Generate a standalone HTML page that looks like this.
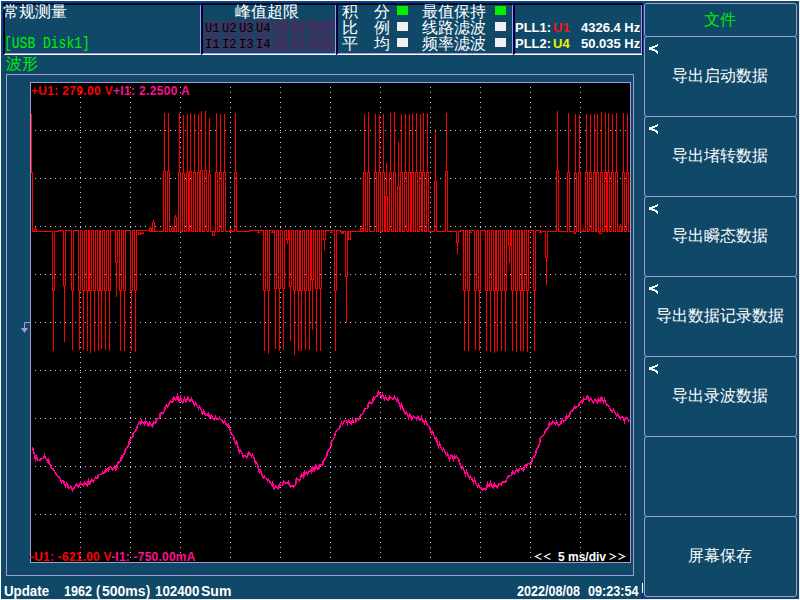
<!DOCTYPE html>
<html><head><meta charset="utf-8">
<style>
*{margin:0;padding:0;box-sizing:border-box}
html,body{width:800px;height:600px;overflow:hidden}
body{-webkit-font-smoothing:antialiased;background:#104968;position:relative;font-family:"Liberation Sans",sans-serif;color:#fff}
.a{position:absolute}
.cj{font-size:16px;line-height:16px;font-weight:300;white-space:nowrap}
.ln{position:absolute}
.btn{position:absolute;left:644px;width:153px;border:1px solid #a898d8;border-radius:3px}
.cell{position:absolute;background:#3a3460;width:15px;height:15px}
.ct{position:absolute;font-family:"Liberation Mono",monospace;font-size:12px;color:#000;white-space:nowrap}
.sq{position:absolute;width:11px;height:9px;background:#f0f0f0}
.b{font-weight:bold;white-space:nowrap}
.pl{font-size:13px;line-height:15px}
.st{top:584px;font-size:14px;line-height:15px;transform:scaleX(0.9);transform-origin:0 0}
</style></head><body>
<!-- image edge -->
<div class="ln" style="left:0;top:0;width:800px;height:1px;background:#fff"></div>
<div class="ln" style="left:0;top:0;width:1px;height:600px;background:#fff"></div>
<div class="ln" style="left:0;top:599px;width:800px;height:1px;background:#e8eef2"></div>
<div class="ln" style="left:799px;top:0;width:1px;height:600px;background:#e8eef2"></div>

<!-- top panels: navy top/left, black inner; white bottom outer, lavender inner -->
<div class="ln" style="left:3px;top:3px;width:640px;height:1px;background:#000080"></div>
<div class="ln" style="left:4px;top:4px;width:638px;height:1px;background:#000"></div>
<div class="ln" style="left:4px;top:53px;width:638px;height:1px;background:#a898d8"></div>
<div class="ln" style="left:3px;top:54px;width:640px;height:1px;background:#fff"></div>
<!-- verticals -->
<div class="ln" style="left:3px;top:3px;width:1px;height:52px;background:#000080"></div>
<div class="ln" style="left:4px;top:4px;width:1px;height:50px;background:#000"></div>
<div class="ln" style="left:200px;top:5px;width:1px;height:49px;background:#a898d8"></div>
<div class="ln" style="left:201px;top:3px;width:1px;height:52px;background:#000080"></div>
<div class="ln" style="left:202px;top:4px;width:1px;height:50px;background:#000"></div>
<div class="ln" style="left:335px;top:5px;width:1px;height:49px;background:#a898d8"></div>
<div class="ln" style="left:336px;top:3px;width:1px;height:52px;background:#000080"></div>
<div class="ln" style="left:337px;top:4px;width:1px;height:50px;background:#000"></div>
<div class="ln" style="left:512px;top:5px;width:1px;height:49px;background:#a898d8"></div>
<div class="ln" style="left:513px;top:3px;width:1px;height:52px;background:#000080"></div>
<div class="ln" style="left:514px;top:4px;width:1px;height:50px;background:#000"></div>
<div class="ln" style="left:641px;top:5px;width:1px;height:49px;background:#a898d8"></div>
<div class="ln" style="left:642px;top:3px;width:1px;height:52px;background:#000080"></div>

<!-- panel 1 -->
<div class="a cj" style="left:3px;top:4px;color:#fff">常规测量</div>
<div class="a" id="usb" style="left:4px;top:36px;color:#00f000;font-family:'Liberation Mono',monospace;font-size:13px;line-height:13px;transform:scaleY(1.2);transform-origin:0 0;white-space:nowrap">[USB Disk1]</div>

<!-- panel 2 -->
<div class="a cj" style="left:235px;top:4px">峰值超限</div>
<div class="cell" style="left:205px;top:20px"></div><div class="cell" style="left:222px;top:20px"></div><div class="cell" style="left:239px;top:20px"></div><div class="cell" style="left:256px;top:20px"></div><div class="cell" style="left:273px;top:20px"></div><div class="cell" style="left:290px;top:20px"></div><div class="cell" style="left:307px;top:20px;width:27px"></div>
<div class="cell" style="left:205px;top:36px"></div><div class="cell" style="left:222px;top:36px"></div><div class="cell" style="left:239px;top:36px"></div><div class="cell" style="left:256px;top:36px"></div><div class="cell" style="left:273px;top:36px"></div><div class="cell" style="left:290px;top:36px"></div><div class="cell" style="left:307px;top:36px;width:27px"></div>
<div class="ct" style="left:205px;top:22px">U1</div><div class="ct" style="left:222px;top:22px">U2</div><div class="ct" style="left:239px;top:22px">U3</div><div class="ct" style="left:256px;top:22px">U4</div>
<div class="ct" style="left:205px;top:38px">I1</div><div class="ct" style="left:222px;top:38px">I2</div><div class="ct" style="left:239px;top:38px">I3</div><div class="ct" style="left:256px;top:38px">I4</div>

<!-- panel 3 -->
<div class="a cj" style="left:342px;top:4px">积</div><div class="a cj" style="left:374px;top:4px">分</div>
<div class="a cj" style="left:342px;top:20px">比</div><div class="a cj" style="left:374px;top:20px">例</div>
<div class="a cj" style="left:342px;top:36px">平</div><div class="a cj" style="left:374px;top:36px">均</div>
<div class="sq" style="left:397px;top:6px;background:#00f000"></div>
<div class="sq" style="left:397px;top:22px"></div>
<div class="sq" style="left:397px;top:38px"></div>
<div class="a cj" style="left:422px;top:4px">最值保持</div>
<div class="a cj" style="left:422px;top:20px">线路滤波</div>
<div class="a cj" style="left:422px;top:36px">频率滤波</div>
<div class="sq" style="left:495px;top:6px;background:#00f000"></div>
<div class="sq" style="left:495px;top:22px"></div>
<div class="sq" style="left:495px;top:38px"></div>

<!-- panel 4 PLL -->
<div class="a b pl" style="left:515px;top:20px">PLL1:</div>
<div class="a b pl" style="left:553px;top:20px;color:#ff1010">U1</div>
<div class="a b pl" style="left:515px;top:36px">PLL2:</div>
<div class="a b pl" style="left:553px;top:36px;color:#f0f000">U4</div>
<div class="a b pl" style="left:581px;top:20px">4326.4 Hz</div>
<div class="a b pl" style="left:581px;top:36px">50.035 Hz</div>

<!-- right menu -->
<div class="btn" style="top:3px;height:34px"></div>
<div class="btn" style="top:36px;height:81px"></div>
<div class="btn" style="top:116px;height:81px"></div>
<div class="btn" style="top:196px;height:81px"></div>
<div class="btn" style="top:276px;height:81px"></div>
<div class="btn" style="top:356px;height:81px"></div>
<div class="btn" style="top:436px;height:81px"></div>
<div class="btn" style="top:516px;height:81px"></div>
<div class="a cj" style="left:704px;top:12px;color:#00f000">文件</div>
<div class="a cj" style="left:672px;top:68px">导出启动数据</div>
<div class="a cj" style="left:672px;top:148px">导出堵转数据</div>
<div class="a cj" style="left:672px;top:228px">导出瞬态数据</div>
<div class="a cj" style="left:656px;top:308px">导出数据记录数据</div>
<div class="a cj" style="left:672px;top:388px">导出录波数据</div>
<div class="a cj" style="left:688px;top:548px">屏幕保存</div>

<svg class="a" style="left:0;top:0" width="800" height="600"><path d="M657 44h1v1h-1zM655 45h3v1h-3zM652 46h5v1h-5zM649 47h6v1h-6zM649 48h4v1h-4zM649 49h6v1h-6zM652 50h5v1h-5zM655 51h3v1h-3zM656 52h2v1h-2zM657 53h1v1h-1zM657 124h1v1h-1zM655 125h3v1h-3zM652 126h5v1h-5zM649 127h6v1h-6zM649 128h4v1h-4zM649 129h6v1h-6zM652 130h5v1h-5zM655 131h3v1h-3zM656 132h2v1h-2zM657 133h1v1h-1zM657 204h1v1h-1zM655 205h3v1h-3zM652 206h5v1h-5zM649 207h6v1h-6zM649 208h4v1h-4zM649 209h6v1h-6zM652 210h5v1h-5zM655 211h3v1h-3zM656 212h2v1h-2zM657 213h1v1h-1zM657 284h1v1h-1zM655 285h3v1h-3zM652 286h5v1h-5zM649 287h6v1h-6zM649 288h4v1h-4zM649 289h6v1h-6zM652 290h5v1h-5zM655 291h3v1h-3zM656 292h2v1h-2zM657 293h1v1h-1zM657 364h1v1h-1zM655 365h3v1h-3zM652 366h5v1h-5zM649 367h6v1h-6zM649 368h4v1h-4zM649 369h6v1h-6zM652 370h5v1h-5zM655 371h3v1h-3zM656 372h2v1h-2zM657 373h1v1h-1z" fill="#fff" shape-rendering="crispEdges"/></svg>
<!-- waveform label + frame -->
<div class="a cj" style="left:6px;top:56px;color:#00f000">波形</div>
<div class="ln" style="left:6px;top:74px;width:628px;height:502px;border:1px solid #a898d8"></div>
<div class="ln" style="left:30px;top:82px;width:601px;height:481px;border:1px solid #a898d8;background:#000"></div>

<svg class="a" style="left:0;top:0" width="800" height="600" viewBox="0 0 800 600">
<path d="M80.5 87V562M130.5 87V562M180.5 87V562M230.5 87V562M280.5 87V562M330.5 87V562M380.5 87V562M430.5 87V562M480.5 87V562M530.5 87V562M580.5 87V562" stroke="#c8c0f0" stroke-width="1" stroke-dasharray="1 4" fill="none"/>
<path d="M35 130.5H630M35 178.5H630M35 226.5H630M35 274.5H630M35 322.5H630M35 370.5H630M35 418.5H630M35 466.5H630M35 514.5H630" stroke="#c8c0f0" stroke-width="1" stroke-dasharray="1 4" fill="none"/>
<path d="M31.5 447.5L32.5 447.5L33.5 451.5L34.5 454.5L35.5 459.5L36.5 456.5L37.5 460.5L38.5 460.5L39.5 460.5L40.5 459.5L41.5 458.5L42.5 458.5L43.5 458.5L44.5 455.5L45.5 458.5L46.5 458.5L47.5 461.5L48.5 459.5L49.5 464.5L50.5 464.5L51.5 468.5L52.5 468.5L53.5 469.5L54.5 471.5L55.5 473.5L56.5 474.5L57.5 476.5L58.5 476.5L59.5 477.5L60.5 479.5L61.5 482.5L62.5 480.5L63.5 480.5L64.5 484.5L65.5 486.5L66.5 483.5L67.5 484.5L68.5 488.5L69.5 488.5L70.5 486.5L71.5 487.5L72.5 490.5L73.5 488.5L74.5 487.5L75.5 485.5L76.5 484.5L77.5 485.5L78.5 486.5L79.5 485.5L80.5 482.5L81.5 484.5L82.5 484.5L83.5 485.5L84.5 482.5L85.5 483.5L86.5 484.5L87.5 485.5L88.5 480.5L89.5 483.5L90.5 482.5L91.5 479.5L92.5 480.5L93.5 481.5L94.5 479.5L95.5 477.5L96.5 478.5L97.5 478.5L98.5 474.5L99.5 474.5L100.5 474.5L101.5 474.5L102.5 472.5L103.5 473.5L104.5 473.5L105.5 469.5L106.5 470.5L107.5 469.5L108.5 470.5L109.5 466.5L110.5 466.5L111.5 468.5L112.5 469.5L113.5 468.5L114.5 466.5L115.5 469.5L116.5 468.5L117.5 463.5L118.5 462.5L119.5 461.5L120.5 461.5L121.5 456.5L122.5 457.5L123.5 454.5L124.5 453.5L125.5 449.5L126.5 448.5L127.5 446.5L128.5 445.5L129.5 440.5L130.5 439.5L131.5 437.5L132.5 437.5L133.5 432.5L134.5 432.5L135.5 430.5L136.5 429.5L137.5 425.5L138.5 423.5L139.5 422.5L140.5 424.5L141.5 420.5L142.5 422.5L143.5 422.5L144.5 424.5L145.5 420.5L146.5 422.5L147.5 422.5L148.5 426.5L149.5 422.5L150.5 423.5L151.5 425.5L152.5 426.5L153.5 422.5L154.5 423.5L155.5 423.5L156.5 419.5L157.5 418.5L158.5 418.5L159.5 418.5L160.5 412.5L161.5 412.5L162.5 413.5L163.5 412.5L164.5 410.5L165.5 406.5L166.5 405.5L167.5 406.5L168.5 405.5L169.5 402.5L170.5 401.5L171.5 402.5L172.5 402.5L173.5 397.5L174.5 398.5L175.5 399.5L176.5 398.5L177.5 395.5L178.5 400.5L179.5 401.5L180.5 397.5L181.5 400.5L182.5 402.5L183.5 401.5L184.5 398.5L185.5 401.5L186.5 400.5L187.5 397.5L188.5 398.5L189.5 401.5L190.5 401.5L191.5 398.5L192.5 400.5L193.5 403.5L194.5 405.5L195.5 402.5L196.5 404.5L197.5 406.5L198.5 408.5L199.5 406.5L200.5 408.5L201.5 410.5L202.5 414.5L203.5 410.5L204.5 412.5L205.5 415.5L206.5 415.5L207.5 414.5L208.5 413.5L209.5 417.5L210.5 416.5L211.5 415.5L212.5 418.5L213.5 418.5L214.5 419.5L215.5 416.5L216.5 418.5L217.5 419.5L218.5 419.5L219.5 417.5L220.5 419.5L221.5 419.5L222.5 421.5L223.5 422.5L224.5 420.5L225.5 423.5L226.5 424.5L227.5 425.5L228.5 424.5L229.5 428.5L230.5 431.5L231.5 434.5L232.5 434.5L233.5 436.5L234.5 440.5L235.5 443.5L236.5 441.5L237.5 445.5L238.5 448.5L239.5 452.5L240.5 450.5L241.5 452.5L242.5 454.5L243.5 457.5L244.5 455.5L245.5 455.5L246.5 457.5L247.5 456.5L248.5 452.5L249.5 453.5L250.5 454.5L251.5 456.5L252.5 454.5L253.5 456.5L254.5 459.5L255.5 463.5L256.5 462.5L257.5 464.5L258.5 468.5L259.5 472.5L260.5 470.5L261.5 473.5L262.5 476.5L263.5 477.5L264.5 476.5L265.5 478.5L266.5 478.5L267.5 480.5L268.5 479.5L269.5 481.5L270.5 482.5L271.5 484.5L272.5 482.5L273.5 487.5L274.5 488.5L275.5 486.5L276.5 487.5L277.5 487.5L278.5 488.5L279.5 484.5L280.5 485.5L281.5 485.5L282.5 485.5L283.5 481.5L284.5 482.5L285.5 482.5L286.5 483.5L287.5 483.5L288.5 481.5L289.5 485.5L290.5 486.5L291.5 485.5L292.5 485.5L293.5 486.5L294.5 485.5L295.5 485.5L296.5 478.5L297.5 479.5L298.5 479.5L299.5 480.5L300.5 478.5L301.5 474.5L302.5 475.5L303.5 477.5L304.5 471.5L305.5 473.5L306.5 472.5L307.5 474.5L308.5 471.5L309.5 471.5L310.5 470.5L311.5 472.5L312.5 466.5L313.5 469.5L314.5 470.5L315.5 465.5L316.5 466.5L317.5 469.5L318.5 469.5L319.5 464.5L320.5 464.5L321.5 465.5L322.5 465.5L323.5 460.5L324.5 459.5L325.5 458.5L326.5 456.5L327.5 451.5L328.5 450.5L329.5 449.5L330.5 447.5L331.5 441.5L332.5 440.5L333.5 438.5L334.5 436.5L335.5 432.5L336.5 430.5L337.5 430.5L338.5 428.5L339.5 428.5L340.5 424.5L341.5 422.5L342.5 424.5L343.5 422.5L344.5 420.5L345.5 420.5L346.5 420.5L347.5 423.5L348.5 420.5L349.5 421.5L350.5 422.5L351.5 423.5L352.5 419.5L353.5 422.5L354.5 422.5L355.5 422.5L356.5 418.5L357.5 418.5L358.5 419.5L359.5 418.5L360.5 415.5L361.5 414.5L362.5 414.5L363.5 412.5L364.5 409.5L365.5 408.5L366.5 408.5L367.5 408.5L368.5 403.5L369.5 402.5L370.5 403.5L371.5 403.5L372.5 402.5L373.5 397.5L374.5 398.5L375.5 396.5L376.5 396.5L377.5 395.5L378.5 391.5L379.5 393.5L380.5 395.5L381.5 397.5L382.5 394.5L383.5 397.5L384.5 399.5L385.5 396.5L386.5 398.5L387.5 400.5L388.5 400.5L389.5 396.5L390.5 397.5L391.5 397.5L392.5 399.5L393.5 399.5L394.5 396.5L395.5 398.5L396.5 400.5L397.5 398.5L398.5 402.5L399.5 403.5L400.5 407.5L401.5 404.5L402.5 408.5L403.5 409.5L404.5 412.5L405.5 413.5L406.5 412.5L407.5 414.5L408.5 417.5L409.5 414.5L410.5 415.5L411.5 419.5L412.5 418.5L413.5 416.5L414.5 417.5L415.5 417.5L416.5 419.5L417.5 416.5L418.5 417.5L419.5 420.5L420.5 420.5L421.5 417.5L422.5 420.5L423.5 421.5L424.5 423.5L425.5 420.5L426.5 423.5L427.5 424.5L428.5 426.5L429.5 426.5L430.5 430.5L431.5 433.5L432.5 431.5L433.5 434.5L434.5 436.5L435.5 439.5L436.5 438.5L437.5 443.5L438.5 446.5L439.5 443.5L440.5 446.5L441.5 448.5L442.5 450.5L443.5 448.5L444.5 450.5L445.5 453.5L446.5 455.5L447.5 453.5L448.5 456.5L449.5 459.5L450.5 456.5L451.5 455.5L452.5 456.5L453.5 459.5L454.5 455.5L455.5 457.5L456.5 456.5L457.5 458.5L458.5 458.5L459.5 462.5L460.5 465.5L461.5 468.5L462.5 466.5L463.5 469.5L464.5 471.5L465.5 474.5L466.5 471.5L467.5 474.5L468.5 475.5L469.5 478.5L470.5 476.5L471.5 478.5L472.5 479.5L473.5 482.5L474.5 479.5L475.5 482.5L476.5 484.5L477.5 486.5L478.5 484.5L479.5 487.5L480.5 487.5L481.5 488.5L482.5 489.5L483.5 488.5L484.5 488.5L485.5 489.5L486.5 488.5L487.5 483.5L488.5 486.5L489.5 486.5L490.5 482.5L491.5 485.5L492.5 486.5L493.5 487.5L494.5 483.5L495.5 485.5L496.5 486.5L497.5 487.5L498.5 484.5L499.5 483.5L500.5 483.5L501.5 484.5L502.5 481.5L503.5 481.5L504.5 482.5L505.5 482.5L506.5 479.5L507.5 477.5L508.5 476.5L509.5 475.5L510.5 475.5L511.5 475.5L512.5 471.5L513.5 472.5L514.5 473.5L515.5 471.5L516.5 469.5L517.5 470.5L518.5 471.5L519.5 468.5L520.5 468.5L521.5 468.5L522.5 469.5L523.5 470.5L524.5 466.5L525.5 465.5L526.5 466.5L527.5 463.5L528.5 463.5L529.5 463.5L530.5 464.5L531.5 462.5L532.5 457.5L533.5 457.5L534.5 456.5L535.5 454.5L536.5 449.5L537.5 448.5L538.5 445.5L539.5 444.5L540.5 437.5L541.5 437.5L542.5 435.5L543.5 435.5L544.5 433.5L545.5 430.5L546.5 429.5L547.5 428.5L548.5 427.5L549.5 422.5L550.5 424.5L551.5 424.5L552.5 421.5L553.5 422.5L554.5 422.5L555.5 424.5L556.5 421.5L557.5 423.5L558.5 425.5L559.5 424.5L560.5 424.5L561.5 420.5L562.5 419.5L563.5 421.5L564.5 420.5L565.5 420.5L566.5 415.5L567.5 417.5L568.5 416.5L569.5 415.5L570.5 411.5L571.5 411.5L572.5 410.5L573.5 409.5L574.5 406.5L575.5 407.5L576.5 406.5L577.5 406.5L578.5 406.5L579.5 402.5L580.5 402.5L581.5 401.5L582.5 402.5L583.5 398.5L584.5 399.5L585.5 399.5L586.5 399.5L587.5 395.5L588.5 399.5L589.5 400.5L590.5 398.5L591.5 399.5L592.5 401.5L593.5 402.5L594.5 400.5L595.5 399.5L596.5 401.5L597.5 402.5L598.5 398.5L599.5 400.5L600.5 401.5L601.5 396.5L602.5 400.5L603.5 402.5L604.5 399.5L605.5 402.5L606.5 404.5L607.5 405.5L608.5 405.5L609.5 407.5L610.5 409.5L611.5 410.5L612.5 411.5L613.5 409.5L614.5 411.5L615.5 413.5L616.5 415.5L617.5 413.5L618.5 416.5L619.5 417.5L620.5 418.5L621.5 416.5L622.5 416.5L623.5 418.5L624.5 421.5L625.5 417.5L626.5 417.5L627.5 418.5L628.5 420.5L629.5 421.5" fill="none" stroke="#ff0090" stroke-width="1.7" shape-rendering="crispEdges"/>
<path d="M31.5 113.5V172.5H32.5V231.5H52.5V290.5H53.5V350.5V290.5H54.5V231.5H58.5V230.5H63.5V285.5H64.5V341.5V285.5H65.5V230.5H71.5V290.5H72.5V349.5V290.5H73.5V230.5H78.5V290.5H79.5V349.5V290.5H80.5V230.5H82.5V290.5H83.5V349.5V290.5H84.5V230.5H86.5V290.5H87.5V350.5V290.5H88.5V230.5H89.5V290.5H90.5V352.5V290.5H91.5V230.5H93.5V290.5H94.5V350.5V290.5H95.5V230.5H97.5V290.5H98.5V350.5V290.5H99.5V230.5H100.5V290.5H101.5V348.5V290.5H102.5V230.5H104.5V290.5H105.5V349.5V290.5H106.5V230.5H108.5V290.5H109.5V350.5V290.5H110.5V230.5H115.5V262.5H116.5V296.5V262.5H117.5V230.5H119.5V290.5H120.5V350.5V290.5H121.5V230.5H123.5V290.5H124.5V350.5V290.5H125.5V230.5H130.5V290.5H131.5V350.5V290.5H132.5V230.5H134.5V290.5H135.5V351.5V290.5H136.5V230.5H149.5V231.5H163.5V171.5H164.5V112.5V171.5H165.5V231.5H167.5V171.5H168.5V112.5V171.5H169.5V231.5H178.5V172.5H179.5V112.5V172.5H180.5V231.5H182.5V173.5H183.5V114.5V173.5H184.5V231.5H186.5V172.5H187.5V113.5V172.5H188.5V231.5H189.5V171.5H190.5V112.5V171.5H191.5V231.5H193.5V172.5H194.5V113.5V172.5H195.5V231.5H197.5V172.5H198.5V113.5V172.5H199.5V231.5H200.5V170.5H201.5V110.5V170.5H202.5V231.5H204.5V170.5H205.5V110.5V170.5H206.5V231.5H208.5V174.5H209.5V117.5V174.5H210.5V231.5H215.5V172.5H216.5V112.5V172.5H217.5V231.5H219.5V172.5H220.5V113.5V172.5H221.5V231.5H223.5V172.5H224.5V113.5V172.5H225.5V231.5H234.5V172.5H235.5V112.5V172.5H236.5V231.5H249.5V230.5H263.5V290.5H264.5V350.5V290.5H265.5V230.5H267.5V290.5H268.5V353.5V290.5H269.5V230.5H274.5V288.5H275.5V348.5V288.5H276.5V230.5H278.5V288.5H279.5V350.5V288.5H280.5V230.5H282.5V288.5H283.5V349.5V288.5H284.5V230.5H286.5V239.5H287.5V243.5V239.5H288.5V230.5H289.5V286.5H290.5V340.5V286.5H291.5V230.5H293.5V290.5H294.5V354.5V290.5H295.5V230.5H297.5V290.5H298.5V350.5V290.5H299.5V230.5H300.5V290.5H301.5V350.5V290.5H302.5V230.5H304.5V290.5H305.5V349.5V290.5H306.5V230.5H308.5V290.5H309.5V349.5V290.5H310.5V230.5H311.5V279.5H312.5V329.5V279.5H313.5V230.5H315.5V288.5H316.5V350.5V288.5H317.5V230.5H319.5V288.5H320.5V350.5V288.5H321.5V230.5H323.5V239.5H324.5V249.5V239.5H325.5V230.5H334.5V290.5H335.5V350.5V290.5H336.5V230.5H340.5V231.5H345.5V276.5H346.5V322.5V276.5H347.5V231.5H363.5V172.5H364.5V113.5V172.5H365.5V231.5H367.5V172.5H368.5V111.5V172.5H369.5V231.5H374.5V172.5H375.5V113.5V172.5H376.5V231.5H378.5V172.5H379.5V114.5V172.5H380.5V231.5H382.5V172.5H383.5V113.5V172.5H384.5V231.5H385.5V196.5H386.5V162.5V196.5H387.5V231.5H389.5V172.5H390.5V112.5V172.5H391.5V231.5H393.5V172.5H394.5V111.5V172.5H395.5V231.5H397.5V186.5H398.5V141.5V186.5H399.5V231.5H400.5V172.5H401.5V113.5V172.5H402.5V231.5H404.5V172.5H405.5V113.5V172.5H406.5V231.5H408.5V172.5H409.5V113.5V172.5H410.5V231.5H411.5V172.5H412.5V112.5V172.5H413.5V231.5H415.5V172.5H416.5V112.5V172.5H417.5V231.5H419.5V172.5H420.5V113.5V172.5H421.5V231.5H422.5V172.5H423.5V112.5V172.5H424.5V231.5H426.5V172.5H427.5V112.5V172.5H428.5V231.5H434.5V181.5H435.5V130.5V181.5H436.5V231.5H445.5V171.5H446.5V112.5V171.5H447.5V231.5H456.5V242.5H457.5V253.5V242.5H458.5V231.5H460.5V230.5H463.5V290.5H464.5V350.5V290.5H465.5V230.5H467.5V290.5H468.5V350.5V290.5H469.5V230.5H474.5V290.5H475.5V349.5V290.5H476.5V230.5H478.5V290.5H479.5V350.5V290.5H480.5V230.5H485.5V290.5H486.5V350.5V290.5H487.5V230.5H489.5V290.5H490.5V351.5V290.5H491.5V230.5H493.5V290.5H494.5V352.5V290.5H495.5V230.5H496.5V290.5H497.5V350.5V290.5H498.5V230.5H500.5V290.5H501.5V350.5V290.5H502.5V230.5H504.5V290.5H505.5V350.5V290.5H506.5V230.5H508.5V245.5H509.5V262.5V245.5H510.5V230.5H511.5V290.5H512.5V350.5V290.5H513.5V230.5H515.5V290.5H516.5V351.5V290.5H517.5V230.5H519.5V290.5H520.5V350.5V290.5H521.5V230.5H522.5V290.5H523.5V350.5V290.5H524.5V230.5H526.5V290.5H527.5V351.5V290.5H528.5V230.5H533.5V290.5H534.5V350.5V290.5H535.5V230.5H540.5V231.5H545.5V257.5H546.5V284.5V257.5H547.5V231.5H556.5V170.5H557.5V110.5V170.5H558.5V231.5H567.5V172.5H568.5V112.5V172.5H569.5V231.5H574.5V173.5H575.5V113.5V173.5H576.5V231.5H578.5V172.5H579.5V114.5V172.5H580.5V231.5H585.5V172.5H586.5V113.5V172.5H587.5V231.5H589.5V172.5H590.5V113.5V172.5H591.5V231.5H593.5V172.5H594.5V113.5V172.5H595.5V231.5H596.5V172.5H597.5V113.5V172.5H598.5V231.5H600.5V172.5H601.5V111.5V172.5H602.5V231.5H604.5V172.5H605.5V112.5V172.5H606.5V231.5H607.5V172.5H608.5V112.5V172.5H609.5V231.5H611.5V172.5H612.5V113.5V172.5H613.5V231.5H615.5V172.5H616.5V112.5V172.5H617.5V231.5H622.5V172.5H623.5V112.5V172.5H624.5V231.5H626.5V172.5H627.5V113.5V172.5H628.5V231.5H629.5" fill="none" stroke="#ff0000" stroke-width="1" shape-rendering="crispEdges"/>
<path d="M34.5 231.5V229.5H35.5V226.5V229.5H36.5V231.5M152.5 231.5V222.5H153.5V219.5V222.5H154.5V231.5M149.5 231.5V228.5H150.5V225.5V228.5H151.5V231.5M174.5 231.5V217.5H175.5V214.5V217.5H176.5V231.5M171.5 231.5V228.5H172.5V225.5V228.5H173.5V231.5M229.5 231.5V230.5H230.5V227.5V230.5H231.5V231.5M257.5 231.5V232.5H258.5V229.5V232.5H259.5V231.5M271.5 231.5V232.5H272.5V229.5V232.5H273.5V231.5M330.5 231.5V232.5H331.5V229.5V232.5H332.5V231.5M341.5 231.5V233.5H342.5V230.5V233.5H343.5V231.5M360.5 231.5V228.5H361.5V225.5V228.5H362.5V231.5M582.5 231.5V231.5H583.5V228.5V231.5H584.5V231.5M619.5 231.5V226.5H620.5V223.5V226.5H621.5V231.5M469.5 231.5V232.5H470.5V229.5V232.5H471.5V231.5M539.5 231.5V232.5H540.5V229.5V232.5H541.5V231.5M138.5 231.5V234.5H140.5V231.5M141.5 231.5V233.5H143.5V231.5M212.5 231.5V235.5H214.5V231.5M348.5 231.5V239.5H350.5V231.5M573.5 231.5V233.5H575.5V231.5M599.5 231.5V233.5H601.5V231.5" fill="none" stroke="#ff0000" stroke-width="1" shape-rendering="crispEdges"/>
<path d="M30.5 322.5H24.5V328.5" fill="none" stroke="#a898d8" stroke-width="1"/>
<path d="M21 328H28L24.5 333Z" fill="#a898d8"/>
</svg>


<!-- plot labels -->
<div class="a b" id="lt" style="left:31px;top:85px;font-size:12px;line-height:12px;color:#ff0000;letter-spacing:0.33px">+U1: 279.00 V<span style="color:#ff1090">+I1: 2.2500 A</span></div>
<div class="a b" id="lb" style="left:30px;top:551px;font-size:12px;line-height:12px;color:#ff0000;letter-spacing:0.22px">-U1: -621.00 V<span style="color:#ff1090">-I1: -750.00mA</span></div>
<div class="a b" id="ms" style="left:558px;top:551px;font-size:12px;line-height:12px;color:#fff">5 ms/div</div>
<svg class="a" style="left:0;top:0" width="800" height="600"><path d="M541.5 553.5L535.5 556.5L541.5 559.5M550.5 553.5L544.5 556.5L550.5 559.5M609.5 553.5L615.5 556.5L609.5 559.5M618.5 553.5L624.5 556.5L618.5 559.5" fill="none" stroke="#fff" stroke-width="1.2"/></svg>
<!-- status bar -->
<div class="a b st" style="left:4px;transform:scaleX(0.95)">Update</div>
<div class="a b st" style="left:64px">1962</div>
<div class="a b st" style="left:96px">(</div>
<div class="a b st" style="left:102px;transform:none">500ms</div>
<div class="a b st" style="left:146px">)</div>
<div class="a b st" style="left:155px;transform:scaleX(0.95)">102400</div>
<div class="a b st" style="left:201px;transform:none">Sum</div>
<div class="a b st" style="left:517px">2022/08/08</div>
<div class="a b st" style="left:588px">09:23:54</div>
<div class="ln" style="left:642px;top:583px;width:1px;height:10px;background:#fff"></div><div class="ln" style="left:642px;top:593px;width:1px;height:6px;background:#2000c0"></div>
</body></html>
